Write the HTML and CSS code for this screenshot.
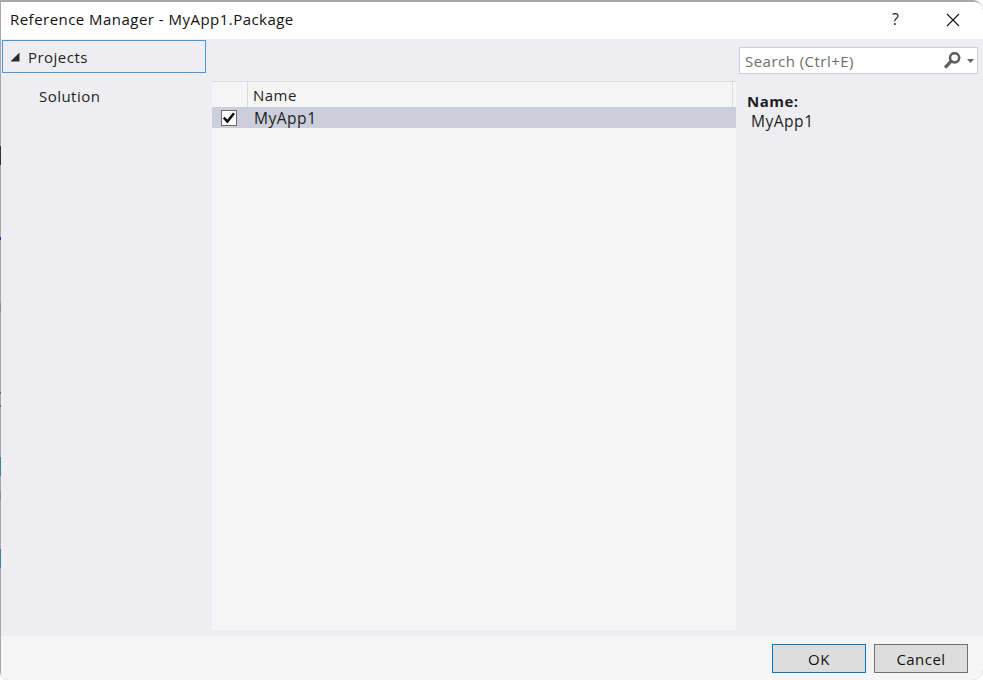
FILE: index.html
```html
<!DOCTYPE html>
<html lang="en">
<head>
<meta charset="utf-8">
<title>Reference Manager</title>
<link rel="stylesheet" href="styles.css">
</head>
<body>
<div class="window">
  <header class="titlebar">
    <span class="title">Reference Manager - MyApp1.Package</span>
    <span class="help">?</span>
    <svg class="close" width="14" height="14" viewBox="0 0 14 14"><path d="M1 1L13 13M13 1L1 13" stroke="#1a1a1a" stroke-width="1.2" fill="none"/></svg>
  </header>
  <main class="main">
    <nav class="nav">
      <div class="nav-head">
        <svg class="tri" width="10" height="10" viewBox="0 0 10 10"><path d="M9.5 0.5V9.5H0.5Z" fill="#2a2a2a"/></svg>
        <span>Projects</span>
      </div>
      <div class="nav-item">Solution</div>
    </nav>
    <section class="center">
      <div class="list">
        <div class="list-head">
          <div class="col-check"></div>
          <div class="col-name">Name</div>
          <div class="col-end"></div>
        </div>
        <div class="row">
          <div class="check">
            <svg width="16" height="16" viewBox="0 0 16 16"><rect x="0.5" y="0.5" width="15" height="15" fill="#fff" stroke="#6b6b6b"/><path d="M2.8 7.6L6.4 11.6L13 3.2" stroke="#111" stroke-width="2.6" fill="none"/></svg>
          </div>
          <div class="row-name">MyApp1</div>
        </div>
      </div>
    </section>
    <aside class="side">
      <div class="search">
        <span class="search-text">Search (Ctrl+E)</span>
        <svg class="glass" width="18" height="18" viewBox="0 0 18 18"><circle cx="10.6" cy="5.8" r="4.6" fill="none" stroke="#5f5f5f" stroke-width="2.6"/><path d="M7 9.4L2 14.6" stroke="#5f5f5f" stroke-width="3.2" stroke-linecap="round"/></svg>
        <svg class="drop" width="7" height="4" viewBox="0 0 7 4"><path d="M0 0H7L3.5 4Z" fill="#666"/></svg>
      </div>
      <div class="detail">
        <div class="detail-label">Name:</div>
        <div class="detail-value">MyApp1</div>
      </div>
    </aside>
  </main>
  <footer class="footer">
    <button class="btn btn-primary">OK</button>
    <button class="btn">Cancel</button>
  </footer>
</div>
</body>
</html>
```
FILE: styles.css
```css
* { box-sizing: border-box; }
html, body { margin: 0; height: 100%; }
body {
  width: 983px;
  height: 680px;
  overflow: hidden;
  background: #fff;
  font-family: "Open Sans", "Noto Sans", sans-serif;
  font-size: 15px;
  letter-spacing: 0.47px;
  color: #1e1e1e;
}
.window {
  width: 983px;
  height: 680px;
  display: flex;
  flex-direction: column;
  padding: 2px 0 0 1px;
  border-radius: 0 10px 10px 8px;
  overflow: hidden;
  background-color: #b4b4b4;
  background-image: linear-gradient(to bottom,
    #a8a8a8 146px, #333 146px, #333 165px, #a8a8a8 165px,
    #a8a8a8 237px, #2b2bd0 237px, #2b2bd0 240px, #a8a8a8 240px,
    #a8a8a8 303px, #8a8f96 303px, #8a8f96 312px, #a8a8a8 312px,
    #a8a8a8 392px, #75604a 392px, #75604a 394px, #a8a8a8 394px,
    #a8a8a8 405px, #75604a 405px, #75604a 407px, #a8a8a8 407px,
    #a8a8a8 457px, #3c7f9e 457px, #3c7f9e 476px, #a8a8a8 476px,
    #a8a8a8 491px, #8a8f96 491px, #8a8f96 500px, #a8a8a8 500px,
    #a8a8a8 549px, #3c7f9e 549px, #3c7f9e 568px, #a8a8a8 568px);
}
.titlebar {
  flex: 0 0 37px;
  display: flex;
  align-items: center;
  background: #fff;
  padding: 0 23px 0 9px;
  border-radius: 0 8px 0 0;
}
.title { flex: 1; color: #111; padding-bottom: 3px; }
.help { margin-right: 47px; font-size: 16px; letter-spacing: 0; color: #222; padding-bottom: 3px; padding-left: 1px; }
.close { margin-bottom: 1px; }
.main {
  flex: 1;
  display: flex;
  background: #eeeef2;
  min-height: 0;
}
.nav {
  flex: 0 0 211px;
  padding: 1px 6px 0 1px;
}
.nav-head {
  height: 33px;
  display: flex;
  align-items: center;
  gap: 8px;
  padding-left: 7px;
  border: 1px solid #3e97ea;
}
.nav-item {
  padding: 13px 0 0 37px;
  line-height: 20px;
}
.center {
  flex: 0 0 524px;
  padding: 42px 0 6px;
}
.list {
  height: 100%;
  background: #f5f5f5;
}
.list-head {
  height: 26px;
  display: flex;
  border-top: 1px solid #d9dae2;
}
.col-check {
  width: 36px;
  border-right: 1px solid #d9dae2;
}
.col-name {
  flex: 1;
  padding: 3px 0 0 5px;
  line-height: 21px;
  border-right: 1px solid #d9dae2;
}
.col-end { width: 3px; }
.row {
  height: 21px;
  display: flex;
  align-items: center;
  background: #cccedb;
}
.check {
  width: 42px;
  height: 16px;
  padding-left: 9px;
  margin-top: 1px;
}
.check svg { display: block; }
.row-name { line-height: 21px; font-size: 15.6px; padding-top: 1px; }
.side {
  flex: 1;
  padding: 8px 5px 0 3px;
}
.search {
  height: 27px;
  display: flex;
  align-items: center;
  background: #fff;
  border: 1px solid #cccedb;
  padding: 1px 3px 0 5px;
}
.search-text { flex: 1; color: #6d6d6d; }
.glass { margin-right: 5px; margin-top: -1px; }
.drop { margin-top: -1px; }
.detail { padding: 17px 0 0 8px; line-height: 21px; }
.detail-label { font-weight: 700; line-height: 20px; }
.detail-value { padding-left: 4px; font-size: 15.6px; }
.footer {
  flex: 0 0 44px;
  display: flex;
  justify-content: flex-end;
  align-items: flex-start;
  gap: 8px;
  padding: 8px 15px 0 0;
  background: #f5f5f5;
}
.btn {
  width: 94px;
  height: 29px;
  padding: 0;
  background: #dddddd;
  border: 1px solid #707070;
  font: inherit;
  letter-spacing: inherit;
  color: #111;
}
.btn-primary { border-color: #0078d7; }
```
